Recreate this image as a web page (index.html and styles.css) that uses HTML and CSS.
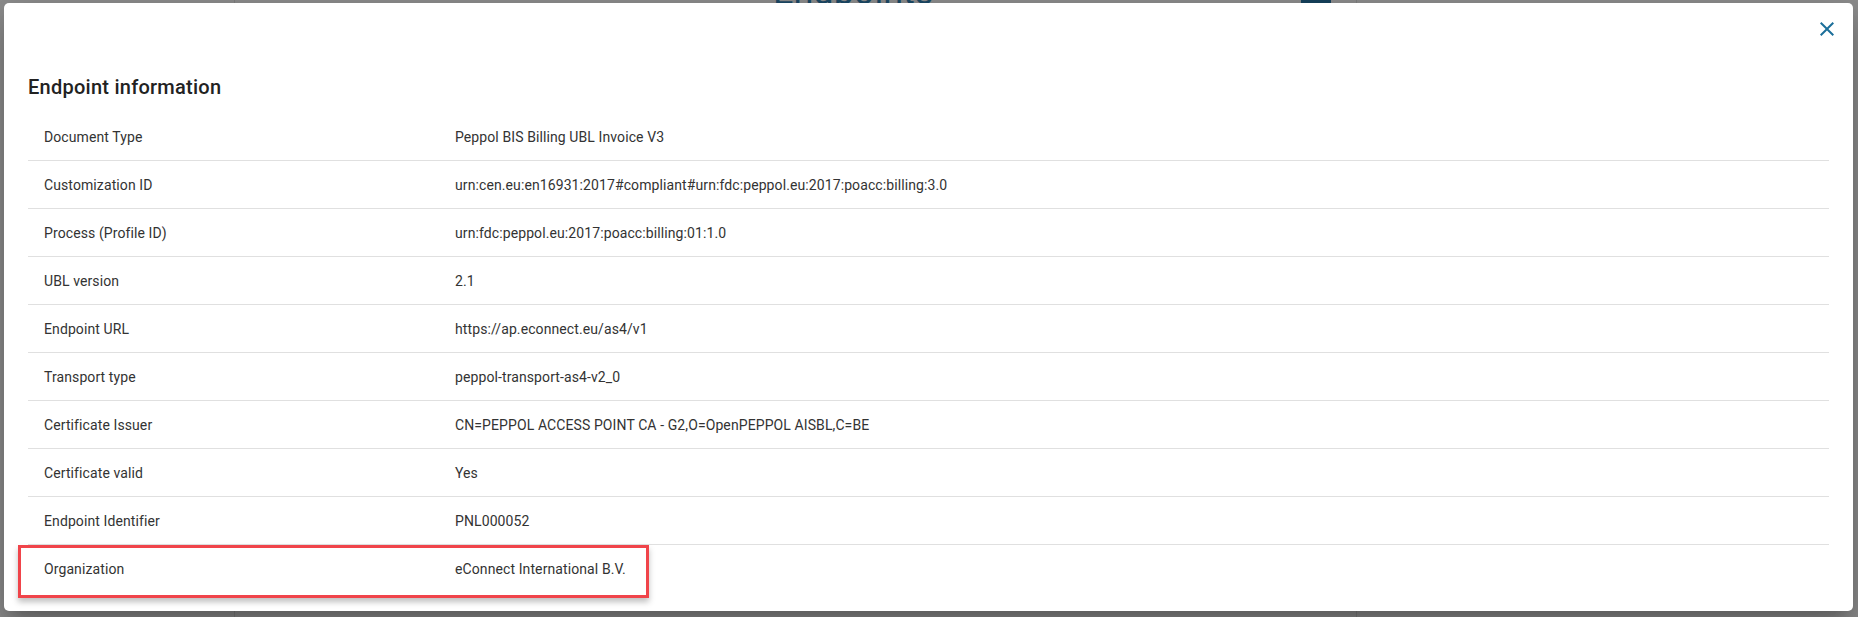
FILE: index.html
```html
<!DOCTYPE html>
<html lang="en">
<head>
<meta charset="utf-8">
<title>Endpoint information</title>
<link rel="stylesheet" href="styles.css">
</head>
<body>
<div class="backdrop">
  <div class="bg-page">
    <div class="bg-heading">Endpoints</div>
    <div class="bg-square"></div>
  </div>
  <div class="modal">
    <button class="close" aria-label="Close">
      <svg viewBox="0 0 24 24" width="24" height="24"><path d="M19 6.41 17.59 5 12 10.59 6.41 5 5 6.41 10.59 12 5 17.59 6.41 19 12 13.41 17.59 19 19 17.59 13.41 12z" fill="currentColor"/></svg>
    </button>
    <h2 class="title">Endpoint information</h2>
    <div class="table">
      <div class="row"><div class="cell">Document Type</div><div class="cell">Peppol BIS Billing UBL Invoice V3</div></div>
      <div class="row"><div class="cell">Customization ID</div><div class="cell">urn:cen.eu:en16931:2017#compliant#urn:fdc:peppol.eu:2017:poacc:billing:3.0</div></div>
      <div class="row"><div class="cell">Process (Profile ID)</div><div class="cell">urn:fdc:peppol.eu:2017:poacc:billing:01:1.0</div></div>
      <div class="row"><div class="cell">UBL version</div><div class="cell">2.1</div></div>
      <div class="row"><div class="cell">Endpoint URL</div><div class="cell">https://ap.econnect.eu/as4/v1</div></div>
      <div class="row"><div class="cell">Transport type</div><div class="cell">peppol-transport-as4-v2_0</div></div>
      <div class="row"><div class="cell">Certificate Issuer</div><div class="cell">CN=PEPPOL ACCESS POINT CA - G2,O=OpenPEPPOL AISBL,C=BE</div></div>
      <div class="row"><div class="cell">Certificate valid</div><div class="cell">Yes</div></div>
      <div class="row"><div class="cell">Endpoint Identifier</div><div class="cell">PNL000052</div></div>
      <div class="row row-last highlighted"><div class="cell">Organization</div><div class="cell">eConnect International B.V.</div><span class="mark"></span></div>
    </div>
  </div>
</div>
</body>
</html>
```

FILE: styles.css
```css
* { box-sizing: border-box; }
html, body { margin: 0; padding: 0; }
body {
  width: 1858px;
  height: 617px;
  overflow: hidden;
  background: #8e8e8e;
  font-family: Roboto, "Noto Sans", Arial, sans-serif;
}
.backdrop {
  position: relative;
  width: 1858px;
  height: 617px;
  padding: 3px 5px 0 4px;
}
.bg-page {
  position: absolute;
  left: 234px;
  top: 0;
  width: 1123px;
  height: 617px;
  border-left: 1px solid #7f7f7f;
  border-right: 1px solid #7f7f7f;
}
.bg-heading {
  position: absolute;
  left: 538px;
  top: -26px;
  font-size: 36px;
  line-height: 36px;
  color: #1c4a66;
}
.bg-square {
  position: absolute;
  left: 1066px;
  top: -20px;
  width: 30px;
  height: 24px;
  background: #17425e;
}
.modal {
  position: relative;
  height: 608px;
  background: #fff;
  border-radius: 5px;
  padding: 68px 24px 0 24px;
  box-shadow: 0 11px 15px -7px rgba(0,0,0,.2), 0 24px 38px 3px rgba(0,0,0,.14), 0 9px 46px 8px rgba(0,0,0,.12);
}
.close {
  position: absolute;
  top: 14px;
  right: 14px;
  width: 24px;
  height: 24px;
  padding: 0;
  border: 0;
  background: none;
  color: #1c6f9a;
  display: flex;
}
.title {
  margin: 0 0 10px 0;
  font-size: 20px;
  line-height: 32px;
  font-weight: 500;
  color: #222;
  letter-spacing: 0.25px;
}
.table {
  display: flex;
  flex-direction: column;
}
.row {
  position: relative;
  display: grid;
  grid-template-columns: 411px 1fr;
  height: 48px;
  align-items: center;
  border-bottom: 1px solid #e0e0e0;
  font-size: 14px;
  letter-spacing: 0.1px;
  color: #333;
}
.row-last { border-bottom: 0; }
.cell { padding-left: 16px; white-space: nowrap; }
.mark {
  position: absolute;
  left: -10px;
  top: 0;
  width: 631px;
  height: 53px;
  border: 3px solid #f0444a;
  box-shadow: 0 4px 6px rgba(0,0,0,.25);
}
```
